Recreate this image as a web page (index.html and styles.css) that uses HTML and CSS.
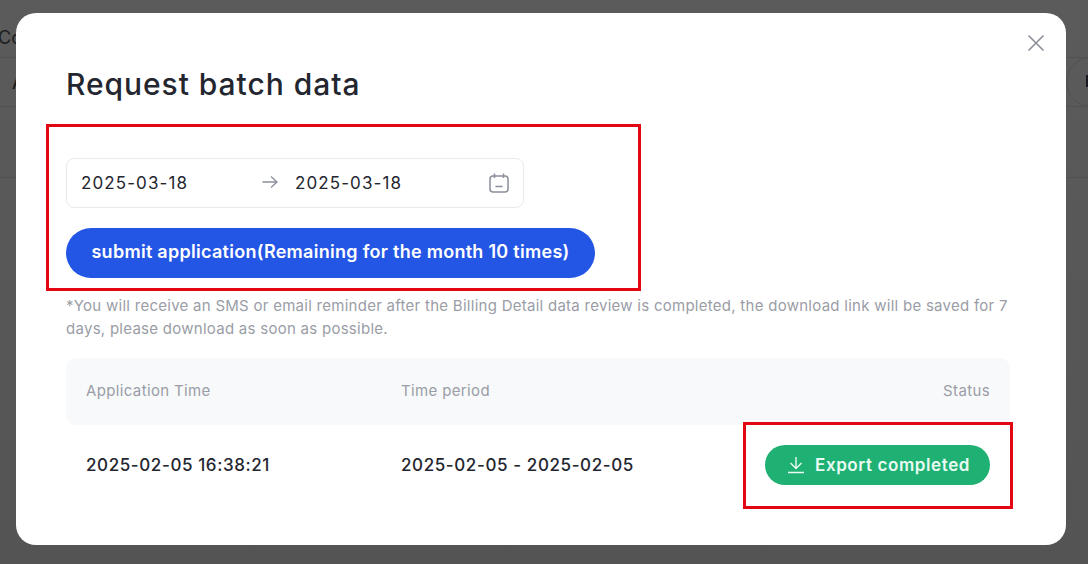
FILE: index.html
```html
<!DOCTYPE html>
<html lang="en">
<head>
    <meta charset="UTF-8">
    <title>Request batch data</title>
    <link rel="stylesheet" href="styles.css">
</head>
<body>

<!-- page behind the overlay -->
<div class="backdrop">
    <div class="back-tabs"><span>Co</span></div>
    <div class="back-head"><span>A</span></div>
    <div class="back-row"></div>
    <div class="back-pager"><span></span></div>
</div>

<main class="modal">
    <button class="close-btn" aria-label="Close">
        <svg viewBox="0 0 18 18" fill="none" stroke="currentColor" stroke-width="1.6">
            <path d="M1.500 1.500l15 15M16.500 1.500l-15 15" />
        </svg>
    </button>

    <h1>Request batch data</h1>

    <div class="range-picker">
        <span class="range-value">2025-03-18</span>
        <svg class="range-arrow" viewBox="0 0 16 16" fill="none" stroke="currentColor" stroke-width="1.3">
            <path d="M0.500 8h14.500M9 2.500L15 8l-6 5.500" />
        </svg>
        <span class="range-value">2025-03-18</span>
        <svg class="range-icon" viewBox="0 0 20 20" fill="none" stroke="currentColor" stroke-width="1.5">
            <rect x="1" y="3" width="18" height="16" rx="3" />
            <path d="M5.500 0.500v4.500M14.500 0.500v4.500M6.500 13.500h7" />
        </svg>
    </div>

    <button class="submit-btn">submit application(Remaining for the month 10 times)</button>

    <p class="note">*You will receive an SMS or email reminder after the Billing Detail data review is completed, the download link will be saved for 7 days, please download as soon as possible.</p>

    <div class="table">
        <div class="table-head">
            <span>Application Time</span>
            <span>Time period</span>
            <span class="col-status">Status</span>
        </div>
        <div class="table-row">
            <span>2025-02-05 16:38:21</span>
            <span>2025-02-05 - 2025-02-05</span>
            <span class="col-status">
                <button class="export-btn">
                    <svg viewBox="0 0 18 18" fill="none" stroke="currentColor" stroke-width="1.4">
                        <path d="M9 1v11M3.500 7L9 12.500 14.500 7M1 16.500h16" />
                    </svg>
                    <span>Export completed</span>
                </button>
            </span>
        </div>
    </div>
</main>

<!-- red annotation boxes drawn on the screenshot -->
<div class="mark mark-form"></div>
<div class="mark mark-export"></div>

</body>
</html>
```

FILE: styles.css
```css
* { margin: 0; padding: 0; box-sizing: border-box; }

html, body { height: 100%; }

body {
    position: relative;
    overflow: hidden;
    background: linear-gradient(#5b5b5b, #545454);
    color: #24262f;
    font-family: 'Inter', sans-serif;
}

/* --- Page behind the overlay --- */
.backdrop { color: #1e1e1e; font-size: 18px; }
.back-tabs { height: 58px; padding-top: 27px; border-bottom: 1px solid #515151; text-indent: -2px; }
.back-head { height: 49px; padding-top: 16px; padding-left: 12px; border-bottom: 1px solid #515151; font-size: 15px; font-weight: 600; }
.back-row { height: 71px; border-bottom: 1px solid #515151; }
.back-pager {
    position: absolute;
    top: 57px;
    left: 1066px;
    width: 50px;
    height: 50px;
    border: 1px solid #515151;
    border-radius: 50%;
}
.back-pager span {
    position: absolute;
    top: 17px;
    left: 19px;
    width: 4px;
    height: 12px;
    background: #1a1a24;
}

/* --- Modal --- */
.modal {
    position: absolute;
    left: 16px;
    top: 13px;
    width: 1050px;
    height: 532px;
    background: #fff;
    border-radius: 20px;
    padding: 50px 56px 50px 50px;
}

.close-btn {
    position: absolute;
    top: 21px;
    right: 21px;
    width: 18px;
    height: 18px;
    border: 0;
    background: none;
    color: #8b8f9a;
}
.close-btn svg { display: block; width: 18px; height: 18px; }

h1 {
    font-size: 30px;
    font-weight: 500;
    line-height: 42px;
    letter-spacing: 0.95px;
    margin-bottom: 53px;
}

.range-picker {
    display: flex;
    align-items: center;
    width: 458px;
    height: 50px;
    padding: 0 14px;
    border: 1px solid #e9eaf0;
    border-radius: 8px;
    font-size: 17px;
    letter-spacing: 1.1px;
}
.range-value { width: 107px; white-space: nowrap; }
.range-arrow { width: 16px; height: 16px; margin: -3px 17px 0 74px; color: #8b8f9a; }
.range-icon { width: 20px; height: 20px; margin-left: auto; color: #8b8f9a; }

.submit-btn {
    display: block;
    width: 529px;
    height: 50px;
    margin-top: 20px;
    padding-bottom: 3px;
    border: 0;
    border-radius: 25px;
    background: #2456e6;
    color: #fff;
    font-family: inherit;
    font-size: 18px;
    font-weight: 600;
    letter-spacing: 0.28px;
}

.note {
    margin-top: 16px;
    font-size: 15px;
    line-height: 23px;
    letter-spacing: 0.27px;
    color: #9a9da6;
}

/* --- Table --- */
.table { margin-top: 18px; }
.table-head, .table-row {
    display: grid;
    grid-template-columns: 315px 1fr auto;
    align-items: center;
    padding: 0 20px;
}
.table-head {
    height: 67px;
    padding-bottom: 2px;
    border-radius: 10px;
    background: #f8f9fb;
    font-size: 15px;
    letter-spacing: 0.36px;
    color: #9a9da6;
}
.table-row { height: 80px; font-size: 17px; font-weight: 500; letter-spacing: 0.6px; }
.col-status { text-align: right; }

.export-btn {
    display: inline-flex;
    align-items: center;
    gap: 10px;
    width: 225px;
    height: 40px;
    padding: 0 20px 0 22px;
    border: 0;
    border-radius: 20px;
    background: #1fb174;
    color: #e9fbf3;
    font-family: inherit;
    font-size: 17px;
    font-weight: 600;
    letter-spacing: 0.6px;
    white-space: nowrap;
}
.export-btn svg { width: 18px; height: 18px; flex: none; }

/* --- Annotation boxes --- */
.mark { position: absolute; border: 3px solid #e30613; }
.mark-form { left: 46px; top: 124px; width: 595px; height: 167px; }
.mark-export { left: 743px; top: 422px; width: 270px; height: 87px; }
```
